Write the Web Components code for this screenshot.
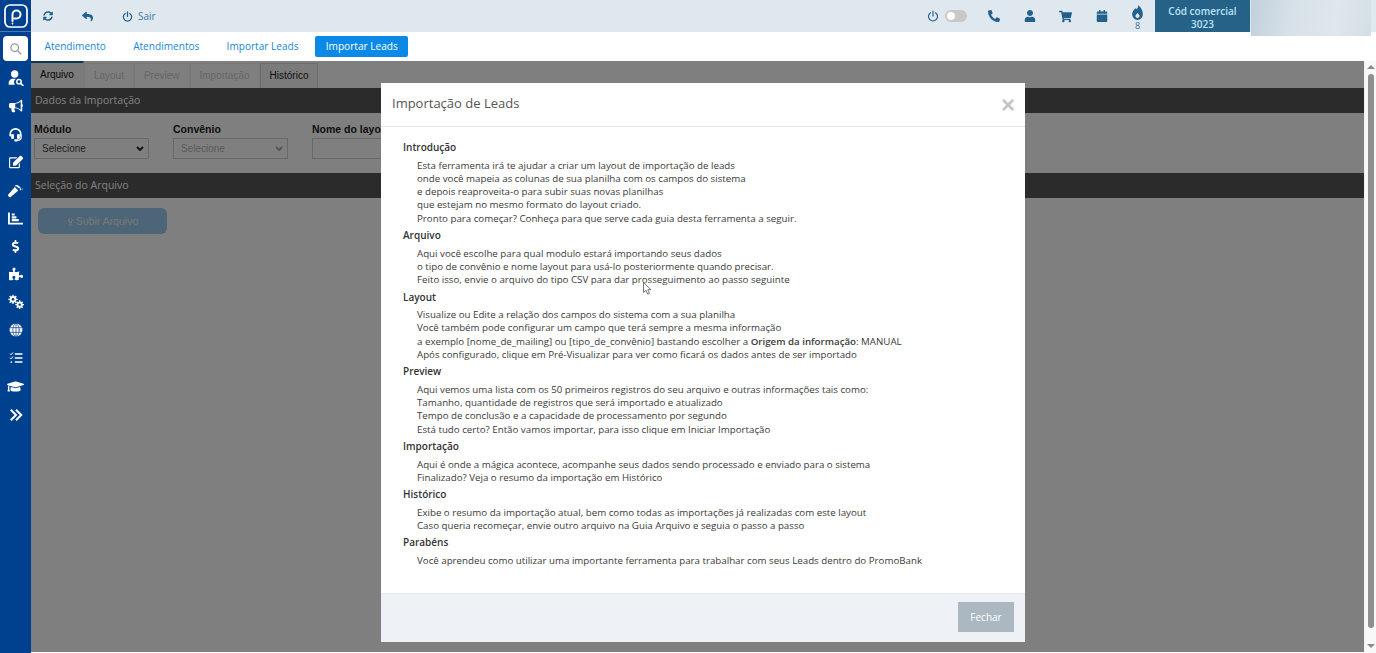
<!DOCTYPE html>
<html lang="pt-BR">
<head>
<meta charset="utf-8">
<title>Importação de Leads</title>
<style>
    html, body { margin: 0; height: 100%; overflow: hidden; }
    body { font-family: "Open Sans", "Liberation Sans", sans-serif; background: #fff; }
    pb-help-section b { font-weight: 600; }
</style>
</head>
<body>
<pb-app>
    <pb-sidebar slot="sidebar"></pb-sidebar>
    <pb-topbar slot="topbar"></pb-topbar>
    <pb-nav slot="nav"></pb-nav>
    <pb-import-page slot="page"></pb-import-page>
    <pb-modal slot="modal" heading="Importação de Leads">
        <pb-help-section title="Introdução">
            <div>Esta ferramenta irá te ajudar a criar um layout de importação de leads</div>
            <div>onde você mapeia as colunas de sua planilha com os campos do sistema</div>
            <div>e depois reaproveita-o para subir suas novas planilhas</div>
            <div>que estejam no mesmo formato do layout criado.</div>
            <div>Pronto para começar? Conheça para que serve cada guia desta ferramenta a seguir.</div>
        </pb-help-section>
        <pb-help-section title="Arquivo">
            <div>Aqui você escolhe para qual modulo estará importando seus dados</div>
            <div>o tipo de convênio e nome layout para usá-lo posteriormente quando precisar.</div>
            <div>Feito isso, envie o arquivo do tipo CSV para dar prosseguimento ao passo seguinte</div>
        </pb-help-section>
        <pb-help-section title="Layout">
            <div>Visualize ou Edite a relação dos campos do sistema com a sua planilha</div>
            <div>Você também pode configurar um campo que terá sempre a mesma informação</div>
            <div>a exemplo [nome_de_mailing] ou [tipo_de_convênio] bastando escolher a <b>Origem da informação</b>: MANUAL</div>
            <div>Após configurado, clique em Pré-Visualizar para ver como ficará os dados antes de ser importado</div>
        </pb-help-section>
        <pb-help-section title="Preview">
            <div>Aqui vemos uma lista com os 50 primeiros registros do seu arquivo e outras informações tais como:</div>
            <div>Tamanho, quantidade de registros que será importado e atualizado</div>
            <div>Tempo de conclusão e a capacidade de processamento por segundo</div>
            <div>Está tudo certo? Então vamos importar, para isso clique em Iniciar Importação</div>
        </pb-help-section>
        <pb-help-section title="Importação">
            <div>Aqui é onde a mágica acontece, acompanhe seus dados sendo processado e enviado para o sistema</div>
            <div>Finalizado? Veja o resumo da importação em Histórico</div>
        </pb-help-section>
        <pb-help-section title="Histórico">
            <div>Exibe o resumo da importação atual, bem como todas as importações já realizadas com este layout</div>
            <div>Caso queria recomeçar, envie outro arquivo na Guia Arquivo e seguia o passo a passo</div>
        </pb-help-section>
        <pb-help-section title="Parabéns">
            <div>Você aprendeu como utilizar uma importante ferramenta para trabalhar com seus Leads dentro do PromoBank</div>
        </pb-help-section>
    </pb-modal>
    <pb-scrollbar slot="scrollbar"></pb-scrollbar>
</pb-app>

<script>
// icon paths, most of them 512 box unless viewBox says otherwise
const ICONS = {
    sync: ['0 0 512 512', 'M370.72 133.28C339.458 104.008 298.888 87.962 255.848 88c-77.458.068-144.328 53.178-162.791 126.85-1.344 5.363-6.122 9.15-11.651 9.15H24.103c-7.498 0-13.194-6.807-11.807-14.176C33.933 94.924 134.813 8 256 8c66.448 0 126.791 26.136 171.315 68.685L463.03 40.97C478.149 25.851 504 36.559 504 57.941V192c0 13.255-10.745 24-24 24H345.941c-21.382 0-32.09-25.851-16.971-40.971l41.75-41.749zM32 296h134.059c21.382 0 32.09 25.851 16.971 40.971l-41.75 41.75c31.262 29.273 71.835 45.319 114.876 45.28 77.418-.07 144.315-53.144 162.787-126.849 1.344-5.363 6.122-9.15 11.651-9.15h57.304c7.498 0 13.194 6.807 11.807 14.176C478.067 417.076 377.187 504 256 504c-66.448 0-126.791-26.136-171.315-68.685L48.97 471.03C33.851 486.149 8 475.441 8 454.059V320c0-13.255 10.745-24 24-24z'],
    reply: ['0 0 512 512', 'M8.309 189.836L184.313 37.851C199.719 24.546 224 35.347 224 56.015v80.053c160.629 1.839 288 34.032 288 186.258 0 61.441-39.581 122.309-83.333 154.132-13.653 9.931-33.111-2.533-28.077-18.631 45.344-145.012-21.507-183.51-176.59-185.742V360c0 20.7-24.3 31.453-39.687 18.164l-176.004-152c-11.071-9.562-11.086-26.753 0-36.328z'],
    phone: ['0 0 512 512', 'M18.6 24.6l104-24c11.3-2.6 22.9 3.3 27.5 13.9l48 112c4.2 9.8 1.4 21.3-6.9 28l-60.6 49.6c36 76.7 98.9 140.5 177.2 177.2l49.6-60.6c6.8-8.3 18.2-11.1 28-6.9l112 48c10.7 4.6 16.6 16.2 14 27.5l-24 104C484.9 504.2 475.3 512 464 512 207.9 512 0 304.5 0 48c0-11.2 7.7-20.9 18.6-23.4z'],
    user: ['0 0 448 512', 'M224 256c70.7 0 128-57.3 128-128S294.7 0 224 0 96 57.3 96 128s57.3 128 128 128zm89.6 32h-16.7c-22.2 10.2-46.9 16-72.9 16s-50.6-5.8-72.9-16h-16.7C60.2 288 0 348.2 0 422.4V464c0 26.5 21.5 48 48 48h352c26.5 0 48-21.5 48-48v-41.6c0-74.2-60.2-134.4-134.4-134.4z'],
    cart: ['0 0 576 512', 'M528.12 301.319l47.273-208C578.806 78.301 567.391 64 551.99 64H159.208l-9.166-44.81C147.758 8.021 137.93 0 126.529 0H24C10.745 0 0 10.745 0 24v16c0 13.255 10.745 24 24 24h69.883l70.248 343.435C147.325 417.1 136 435.222 136 456c0 30.928 25.072 56 56 56s56-25.072 56-56c0-15.674-6.447-29.835-16.824-40h209.647C430.447 426.165 424 440.326 424 456c0 30.928 25.072 56 56 56s56-25.072 56-56c0-22.172-12.888-41.332-31.579-50.405l5.517-24.276c3.413-15.018-8.002-29.319-23.403-29.319H218.117l-6.545-32h293.145c11.206 0 20.92-7.754 23.403-18.681z'],
    calendar: ['0 0 448 512', 'M12 192h424c6.6 0 12 5.4 12 12v260c0 26.5-21.5 48-48 48H48c-26.5 0-48-21.5-48-48V204c0-6.6 5.4-12 12-12zm436-44v-36c0-26.5-21.5-48-48-48h-48V12c0-6.6-5.4-12-12-12h-40c-6.6 0-12 5.4-12 12v52H160V12c0-6.6-5.4-12-12-12h-40c-6.6 0-12 5.4-12 12v52H48C21.5 64 0 85.5 0 112v36c0 6.6 5.4 12 12 12h424c6.6 0 12-5.4 12-12z'],
    flame: ['0 0 384 512', 'M216 0c14 74 -22 114 -56 152c-8 -18 -14 -34 -18 -52C70 150 10 214 10 310c0 116 82 202 182 202s182 -86 182 -204C374 190 300 70 216 0zM192 440c-40 0 -70 -28 -70 -66c0 -38 40 -58 70 -100c30 42 70 62 70 100c0 38 -30 66 -70 66z'],
    bullhorn: ['0 0 576 512', 'M544 184V32c0-9-7-32-32-32-7 0-14 2-20 7l-85 68C364 109 311 128 256 128H64C29 128 0 157 0 192v96c0 35 29 64 64 64h34c-2 10-2 21-2 32 0 40 9 77 25 111 5 10 16 17 28 17h74c26 0 42-28 26-49-16-22-26-49-26-79 0-11 2-22 5-32h28c55 0 108 19 151 53l85 68c6 5 13 7 20 7 25 0 32-23 32-32V296c19-11 32-32 32-56s-13-45-32-56zM480 413l-33-26c-53-43-121-67-191-67V160c70 0 138-24 191-67l33-26v346z'],
    hammer: ['0 0 576 512', 'M571 231l-23-23c-6-6-16-6-22 0l-11 11-28-28c5-20 0-42-15-58l-45-45C372 33 298 32 253 86c-3 4-1 10 4 10h55c9 0 22 5 30 12l36 36-1 1c16 15 38 21 58 15l28 28-11 11c-6 6-6 16 0 22l23 23c6 6 16 6 22 0l74-75c6-6 6-16 0-22zM262 122L12 414c-16 16-16 41 0 57l34 34c16 16 41 16 57 0l292-250z'],
    edit: ['0 0 576 512', 'M403 344l32-32c5-5 14-2 14 6v146c0 26-22 48-48 48H48c-26 0-48-22-48-48V112c0-26 22-48 48-48h274c7 0 11 9 6 14l-32 32c-2 2-5 3-8 3H48v352h352V352c0-3 1-6 3-8zM560 142L297 405l-90 10c-26 3-48-19-45-45l10-90L435 17c23-23 60-23 83 0l42 42c23 23 23 61 0 83z'],
    chart: ['0 0 512 512', 'M500 400c7 0 12 5 12 12v40c0 7-5 12-12 12H24c-13 0-24-11-24-24V60c0-7 5-12 12-12h40c7 0 12 5 12 12v340zM128 336v-48c0-7 5-12 12-12h216c7 0 12 5 12 12v48c0 7-5 12-12 12H140c-7 0-12-5-12-12zm0-96v-48c0-7 5-12 12-12h136c7 0 12 5 12 12v48c0 7-5 12-12 12H140c-7 0-12-5-12-12zm0-96V96c0-7 5-12 12-12h76c7 0 12 5 12 12v48c0 7-5 12-12 12H140c-7 0-12-5-12-12z'],
    dollar: ['0 0 288 512', 'M209.2 233.4l-108-31.6C88.7 198.2 80 186.5 80 173.5c0-16.3 13.2-29.5 29.5-29.5h66.3c12.2 0 24.2 3.7 34.2 10.5 6.1 4.1 14.3 3.1 19.5-2l34.8-34c7.1-6.9 6.1-18.4-1.8-24.5C238 74.8 207.4 64.1 176 64V16c0-8.8-7.2-16-16-16h-32c-8.8 0-16 7.2-16 16v48h-2.5C45.8 64-5.4 118.7.5 183.6c4.2 46.1 39.4 83.6 83.8 96.6l102.5 30c12.5 3.7 21.2 15.3 21.2 28.3 0 16.3-13.2 29.5-29.5 29.5h-66.3C100 368 88 364.3 78 357.5c-6.1-4.1-14.3-3.1-19.5 2l-34.8 34c-7.1 6.9-6.1 18.4 1.8 24.5 24.5 19.2 55.1 29.9 86.5 30v48c0 8.8 7.2 16 16 16h32c8.8 0 16-7.2 16-16v-48.2c46.6-.9 90.3-28.6 105.7-72.7 21.5-61.6-14.6-124.8-72.5-141.7z'],
    puzzle: ['0 0 576 512', 'M519.442 288.651c-41.519 0-59.5 31.593-82.058 31.593C377.409 320.244 432 144 432 144s-196.288 80-196.288-3.297c0-35.827 36.288-46.25 36.288-85.985C272 19.216 243.885 0 210.539 0c-34.654 0-66.366 18.891-66.366 56.346 0 41.364 31.711 59.277 31.711 81.75C175.885 207.719 0 166.758 0 166.758v333.237s178.635 41.047 178.635-28.662c0-22.473-40-40.107-40-81.471 0-37.456 29.25-56.346 63.577-56.346 33.673 0 61.788 19.216 61.788 54.717 0 39.735-36.288 50.158-36.288 85.985 0 60.803 129.675 25.73 181.23 25.73 0 0-34.725-120.101 25.827-120.101 35.962 0 46.423 36.152 86.308 36.152C556.712 416 576 387.99 576 354.443c0-34.199-18.962-65.792-56.558-65.792z'],
    cap: ['0 0 640 512', 'M622.34 153.2L343.4 67.5c-15.2-4.67-31.6-4.67-46.79 0L17.66 153.2c-23.54 7.23-23.54 38.36 0 45.59l48.63 14.94c-10.67 13.19-17.23 29.28-17.88 46.9C38.78 266.15 32 276.11 32 288c0 10.78 5.68 19.85 13.86 25.65L20.33 428.53C18.11 438.52 25.71 448 35.94 448h56.11c10.24 0 17.84-9.48 15.62-19.47L82.14 313.65C90.32 307.85 96 298.78 96 288c0-11.57-6.47-21.25-15.66-26.87.76-15.02 8.44-28.3 20.69-36.72L296.6 284.5c9.06 2.78 26.44 6.25 46.79 0l278.95-85.7c23.55-7.24 23.55-38.36 0-45.6zM352.79 315.09c-28.53 8.76-52.84 3.92-65.59 0l-145.02-44.55L128 384c0 35.35 85.96 64 192 64s192-28.65 192-64l-14.18-113.47-145.03 44.56z']
};

// icons made of strokes, drawn on a 24 box
const STROKE_ICONS = {
    power: '<path d="M7 5.5a9 9 0 1 0 10 0" /><path d="M12 2v10" />',
    search: '<circle cx="10.5" cy="10.5" r="7" /><path d="M16 16l6 6" />',
    globe: '<circle cx="12" cy="12" r="11" fill="currentColor" stroke="none" /><g stroke="#00418f" stroke-width="1.2"><path d="M1.500 8h21M1.500 16h21M12 1v22" /><ellipse cx="12" cy="12" rx="5.500" ry="11" /></g>',
    tasks: '<path d="M10 5h13M10 12h13M10 19h13" stroke-width="2.6" stroke-linecap="butt" /><path d="M2 5l1.5 1.5L6.500 3M2 12l1.5 1.500L6.500 10" stroke-width="1.7" /><circle cx="4" cy="19" r="1.500" fill="currentColor" stroke="none" />',
    chevrons: '<path d="M3 3l9 9-9 9M12 3l9 9-9 9" stroke-width="3.4" stroke-linecap="butt" stroke-linejoin="miter" />',
    headset: '<path d="M3.500 14v-2.500a8.500 8.500 0 0 1 17 0V14" stroke-width="2.600" /><rect x="5" y="11" width="4.500" height="8" rx="1.500" fill="currentColor" stroke="none" /><rect x="14.500" y="11" width="4.500" height="8" rx="1.500" fill="currentColor" stroke="none" /><path d="M21 14v3c0 3-3 4-6 4" stroke-width="2" /><rect x="10" y="19.500" width="6" height="3.500" rx="1.500" fill="currentColor" stroke="none" />',
    usersearch: '<circle cx="10" cy="6" r="5.500" fill="currentColor" stroke="none" /><path d="M1 22v-3c0-3.500 3-6 6-6h5c-2 1.500-3 3-3 5 0 1.500.5 3 1.500 4z" fill="currentColor" stroke="none" /><circle cx="16.500" cy="17.500" r="3.300" stroke-width="2.200" /><path d="M19 20l3.500 3.500" stroke-width="2.400" />',
    cogs: '<g fill="currentColor" stroke="none"><circle cx="7.500" cy="8" r="5" /><circle cx="17.500" cy="16" r="4.600" /></g><g stroke-width="2" stroke-linecap="butt"><path d="M7.500 1v14M.5 8h14M2.500 3l10 10M12.500 3l-10 10" /><path d="M17.500 9.500v13M11 16h13M13 11.500l9 9M22 11.500l-9 9" /></g><g fill="#00418f" stroke="none"><circle cx="7.500" cy="8" r="2" /><circle cx="17.500" cy="16" r="1.800" /></g>'
};

class PbIcon extends HTMLElement {
    connectedCallback() {
        const name = this.getAttribute('name');
        const size = this.getAttribute('size') || 16;
        const weight = this.getAttribute('weight') || 2.4;
        const root = this.attachShadow({ mode: 'open' });
        let svg;
        if (ICONS[name]) {
            const [box, d] = ICONS[name];
            svg = `<svg viewBox="${box}" width="${size}" height="${size}"><path fill="currentColor" d="${d}"/></svg>`;
        } else {
            svg = `<svg viewBox="0 0 24 24" width="${size}" height="${size}" fill="none" stroke="currentColor" stroke-width="${weight}" stroke-linecap="round" stroke-linejoin="round">${STROKE_ICONS[name]}</svg>`;
        }
        root.innerHTML = `
            <style>
                :host { display: inline-flex; align-items: center; justify-content: center; line-height: 0; }
            </style>
            ${svg}
        `;
    }
}
customElements.define('pb-icon', PbIcon);

class PbApp extends HTMLElement {
    constructor() {
        super();
        this.attachShadow({ mode: 'open' }).innerHTML = `
            <style>
                :host { display: grid; grid-template-columns: 31px 1fr; grid-template-rows: 32px 29px 1fr; height: 100vh; }
                .side { grid-row: 1 / 4; display: flex; }
                .top { grid-column: 2; }
                .nav { grid-column: 2; }
                .body { grid-column: 2; display: flex; min-height: 0; }
                .main { flex: 1; position: relative; min-width: 0; margin-bottom: 1px; overflow: hidden; }
            </style>
            <div class="side"><slot name="sidebar"></slot></div>
            <div class="top"><slot name="topbar"></slot></div>
            <div class="nav"><slot name="nav"></slot></div>
            <div class="body">
                <div class="main">
                    <slot name="page"></slot>
                    <slot name="modal"></slot>
                </div>
                <slot name="scrollbar"></slot>
            </div>
        `;
    }
}
customElements.define('pb-app', PbApp);

class PbSidebar extends HTMLElement {
    constructor() {
        super();
        const items = [
            ['usersearch', 16], ['bullhorn', 14], ['headset', 15], ['edit', 14], ['hammer', 15],
            ['chart', 15], ['dollar', 13], ['puzzle', 14], ['cogs', 16], ['globe', 14],
            ['tasks', 14], ['cap', 17], ['chevrons', 14]
        ];
        this.attachShadow({ mode: 'open' }).innerHTML = `
            <style>
                :host { display: flex; flex-direction: column; align-items: center; width: 31px; background: #00418f; color: #fff; }
                .logo { height: 31px; width: 100%; display: flex; align-items: center; justify-content: center; border-bottom: 1px solid #4c7ab0; }
                .search { margin-top: 4px; width: 25px; height: 25px; background: #fff; border-radius: 4px; color: #999; display: flex; align-items: center; justify-content: center; }
                .items { display: flex; flex-direction: column; align-items: center; margin-top: 3px; }
                .item { height: 28px; display: flex; align-items: center; justify-content: center; }
                .item:last-child { margin-top: 1px; }
            </style>
            <div class="logo">
                <svg width="24" height="24" viewBox="0 0 24 24" fill="none" stroke="#fff">
                    <rect x="1" y="1" width="22" height="22" rx="5" stroke-width="1.700" />
                    <path d="M8.500 17V10.500a4 4 0 1 1 4 4H10.500" stroke-width="2" stroke-linecap="round" />
                    <circle cx="8.500" cy="19.500" r=".9" fill="#fff" stroke="none" />
                </svg>
            </div>
            <div class="search"><pb-icon name="search" size="13"></pb-icon></div>
            <div class="items">
                ${items.map(([n, s]) => `<div class="item"><pb-icon name="${n}" size="${s}"></pb-icon></div>`).join('')}
            </div>
        `;
    }
}
customElements.define('pb-sidebar', PbSidebar);

class PbTopbar extends HTMLElement {
    constructor() {
        super();
        this.attachShadow({ mode: 'open' }).innerHTML = `
            <style>
                :host { display: flex; align-items: center; height: 32px; background: #dfe7ef; color: #23618c; font-size: 10px; position: relative; }
                .left { display: flex; align-items: center; padding-left: 12px; }
                .reply { margin-left: 29px; }
                .sair { margin-left: 29px; display: flex; align-items: center; gap: 5px; font-size: 10px; color: #3f7aa5; }
                .sair pb-icon { color: #23618c; }
                .right { margin-left: auto; display: flex; align-items: center; height: 32px; }
                .power { margin-right: 6px; color: #2a648c; }
                .toggle { width: 22px; height: 12px; border-radius: 6px; background: #c8c8c8; position: relative; margin-right: 20px; }
                .toggle::before { content: ""; position: absolute; left: 2px; top: 2px; width: 8px; height: 8px; border-radius: 50%; background: #fff; }
                .ic { display: flex; justify-content: center; }
                .fire { display: flex; flex-direction: column; align-items: center; width: 22px; margin-right: 6.500px; padding-top: 3px; }
                .fire span { font-size: 9px; line-height: 11px; color: #3f6f90; }
                .code { width: 95px; height: 32px; box-sizing: border-box; padding-top: 4px; background: #266288; color: #b9e2f6; font-size: 10px; font-weight: 600; line-height: 13.500px; text-align: center; display: flex; flex-direction: column; justify-content: center; margin-right: 1px; }
                .blur { width: 120px; height: 36px; background: linear-gradient(100deg, #c0d0dc 0%, #d7e1e8 35%, #dfe7ec 70%, #d3dee5 100%); margin-right: 5px; align-self: flex-start; margin-bottom: -4px; }
            </style>
            <div class="left">
                <pb-icon name="sync" size="10"></pb-icon>
                <pb-icon class="reply" name="reply" size="11"></pb-icon>
                <div class="sair"><pb-icon name="power" size="11" weight="2.800"></pb-icon><span>Sair</span></div>
            </div>
            <div class="right">
                <pb-icon class="power" name="power" size="12" weight="2.400"></pb-icon>
                <div class="toggle"></div>
                <div class="ic" style="width:14px;margin-right:22px"><pb-icon name="phone" size="12"></pb-icon></div>
                <div class="ic" style="width:14px;margin-right:21.500px"><pb-icon name="user" size="12"></pb-icon></div>
                <div class="ic" style="width:14px;margin-right:23px"><pb-icon name="cart" size="13"></pb-icon></div>
                <div class="ic" style="width:12px;margin-right:19px"><pb-icon name="calendar" size="12"></pb-icon></div>
                <div class="fire"><pb-icon name="flame" size="15"></pb-icon><span>8</span></div>
                <div class="code"><div>Cód comercial</div><div>3023</div></div>
                <div class="blur"></div>
            </div>
        `;
    }
}
customElements.define('pb-topbar', PbTopbar);

class PbNav extends HTMLElement {
    constructor() {
        super();
        this.attachShadow({ mode: 'open' }).innerHTML = `
            <style>
                :host { display: flex; align-items: flex-start; height: 29px; background: #fff; font-size: 10.100px; padding-left: 3px; padding-top: 4px; box-sizing: border-box; }
                a { display: block; height: 21px; line-height: 20px; padding: 0 10.500px; margin-right: 6.200px; color: #1b87d6; border-radius: 2px; white-space: nowrap; }
                a.active { background: #0a8ae6; color: #fff; }
            </style>
            <a>Atendimento</a><a>Atendimentos</a><a>Importar Leads</a><a class="active">Importar Leads</a>
        `;
    }
}
customElements.define('pb-nav', PbNav);

class PbImportPage extends HTMLElement {
    constructor() {
        super();
        this.attachShadow({ mode: 'open' }).innerHTML = `
            <style>
                :host { display: block; background: #fff; height: 100%; font-family: "Liberation Sans", Arial, sans-serif; font-size: 10px; color: #222; }
                .tabs { display: flex; height: 27px; box-sizing: border-box; }
                .tab { padding: 0 9px 2px; display: flex; align-items: center; color: #ccc; border: 1px solid #f2f2f2; border-bottom: 0; margin-top: 2px; }
                .tab.on { color: #222; background: #f6f6f6; border-color: #d8d8d8; }
                .tab.first { margin-top: 0; border-top: 2px solid #1b6fa8; border-left: 0; background: #f6f6f6; color: #111; }
                .bar { height: 25px; box-sizing: border-box; padding: 0 0 2px 4px; background: #565656; color: #fff; font-family: "Open Sans", sans-serif; font-size: 10.500px; font-weight: 400; display: flex; align-items: center; }
                .form { display: flex; gap: 24px; padding: 10px 3px 0; height: 60px; box-sizing: border-box; }
                label { display: block; font-weight: 700; font-size: 10.500px; line-height: 13px; color: #1c1c1c; }
                .select { margin-top: 2px; width: 115px; height: 21px; border: 1px solid #d2d2d2; box-sizing: border-box; display: flex; align-items: center; justify-content: space-between; padding: 0 4px 0 7px; color: #444; background: #fff; }
                .select.off { color: #b5b5b5; }
                .input { margin-top: 2px; width: 115px; height: 21px; border: 1px solid #d2d2d2; box-sizing: border-box; }
                svg { display: block; }
                .upload { margin: 10px 0 0 7px; width: 129px; height: 26px; background: #98cdee; border-radius: 6px; color: #eee; display: flex; align-items: center; justify-content: center; font-size: 10.500px; gap: 2px; }
            </style>
            <div class="tabs">
                <div class="tab first">Arquivo</div><div class="tab">Layout</div><div class="tab">Preview</div><div class="tab">Importação</div><div class="tab on">Histórico</div>
            </div>
            <div class="bar">Dados da Importação</div>
            <div class="form">
                <div><label>Módulo</label><div class="select"><span>Selecione</span>${this.caret('#222')}</div></div>
                <div><label>Convênio</label><div class="select off"><span>Selecione</span>${this.caret('#aaa')}</div></div>
                <div><label>Nome do layout</label><div class="input"></div></div>
            </div>
            <div class="bar">Seleção do Arquivo</div>
            <div class="upload">
                <svg width="7" height="9" viewBox="0 0 7 9" fill="none" stroke="#eee"><path d="M3.500 1L1 3.500h1.500V6h2V3.500H6zM1.500 8h4" /></svg>
                <span>Subir Arquivo</span>
            </div>
        `;
    }
    caret(color) {
        return `<svg width="8" height="6" viewBox="0 0 8 6"><path d="M1 1l3 3 3-3" fill="none" stroke="${color}" stroke-width="1.800"/></svg>`;
    }
}
customElements.define('pb-import-page', PbImportPage);

class PbHelpSection extends HTMLElement {
    constructor() {
        super();
        this.attachShadow({ mode: 'open' }).innerHTML = `
            <style>
                :host { display: block; margin-bottom: 1.950px; }
                h4 { margin: 0 0 2px; font-size: 10px; font-weight: 600; line-height: 17.500px; color: #333; }
                .lines { padding-left: 14px; font-size: 9.720px; line-height: 13.330px; color: #3a3a3a; white-space: nowrap; }
            </style>
            <h4></h4>
            <div class="lines"><slot></slot></div>
        `;
        this.shadowRoot.querySelector('h4').textContent = this.getAttribute('title');
    }
}
customElements.define('pb-help-section', PbHelpSection);

class PbModal extends HTMLElement {
    constructor() {
        super();
        this.attachShadow({ mode: 'open' }).innerHTML = `
            <style>
                :host { position: absolute; inset: 0; background: rgba(0, 0, 0, 0.5); display: block; }
                .dialog { position: absolute; left: 350px; top: 22px; width: 644px; height: 559px; background: #fff; display: flex; flex-direction: column; }
                .head { height: 43px; box-sizing: content-box; border-bottom: 1px solid #e5e5e5; display: flex; align-items: center; justify-content: space-between; padding: 0 10px 0 11px; flex: none; }
                .head span { font-size: 13px; color: #555; margin-bottom: 4px; }
                .close { font-family: "Liberation Sans", sans-serif; font-size: 24px; font-weight: 700; color: #c4c4c4; line-height: 1; }
                .content { flex: 1; padding: 12px 22px 0; min-height: 0; }
                .foot { height: 49px; box-sizing: border-box; padding: 0 11px 2px 0; background: #eef1f6; border-top: 1px solid #e7e9ee; display: flex; align-items: center; justify-content: flex-end; flex: none; }
                .btn { width: 56px; height: 30px; background: #abb8c1; color: #fff; font-size: 10px; display: flex; align-items: center; justify-content: center; }
                .cursor { position: absolute; left: 612px; top: 221px; }
            </style>
            <div class="dialog">
                <div class="head"><span></span><div class="close">×</div></div>
                <div class="content"><slot></slot></div>
                <div class="foot"><div class="btn">Fechar</div></div>
            </div>
            <svg class="cursor" width="10" height="13" viewBox="0 0 10 13"><path d="M.5.5v10l2.500-2.200 1.700 3.800 1.800-.8-1.700-3.600H8z" fill="#fff" stroke="#555" stroke-width=".8" /></svg>
        `;
        this.shadowRoot.querySelector('.head span').textContent = this.getAttribute('heading');
    }
}
customElements.define('pb-modal', PbModal);

class PbScrollbar extends HTMLElement {
    constructor() {
        super();
        this.attachShadow({ mode: 'open' }).innerHTML = `
            <style>
                :host { display: flex; flex-direction: column; align-items: center; width: 12px; background: #f8f8f8; border-left: 1px solid #eee; box-sizing: border-box; flex: none; }
                .up { width: 0; height: 0; border: 4px solid transparent; border-top: 0; border-bottom: 4px solid #8a8a8a; margin-top: 4px; }
                .thumb { flex: 1; width: 6px; background: #8f8f8f; border-radius: 3px; margin: 5px 0 16px; }
                .down { width: 0; height: 0; border: 4px solid transparent; border-bottom: 0; border-top: 4px solid #8a8a8a; margin-bottom: 5px; }
            </style>
            <div class="up"></div><div class="thumb"></div><div class="down"></div>
        `;
    }
}
customElements.define('pb-scrollbar', PbScrollbar);
</script>
</body>
</html>
